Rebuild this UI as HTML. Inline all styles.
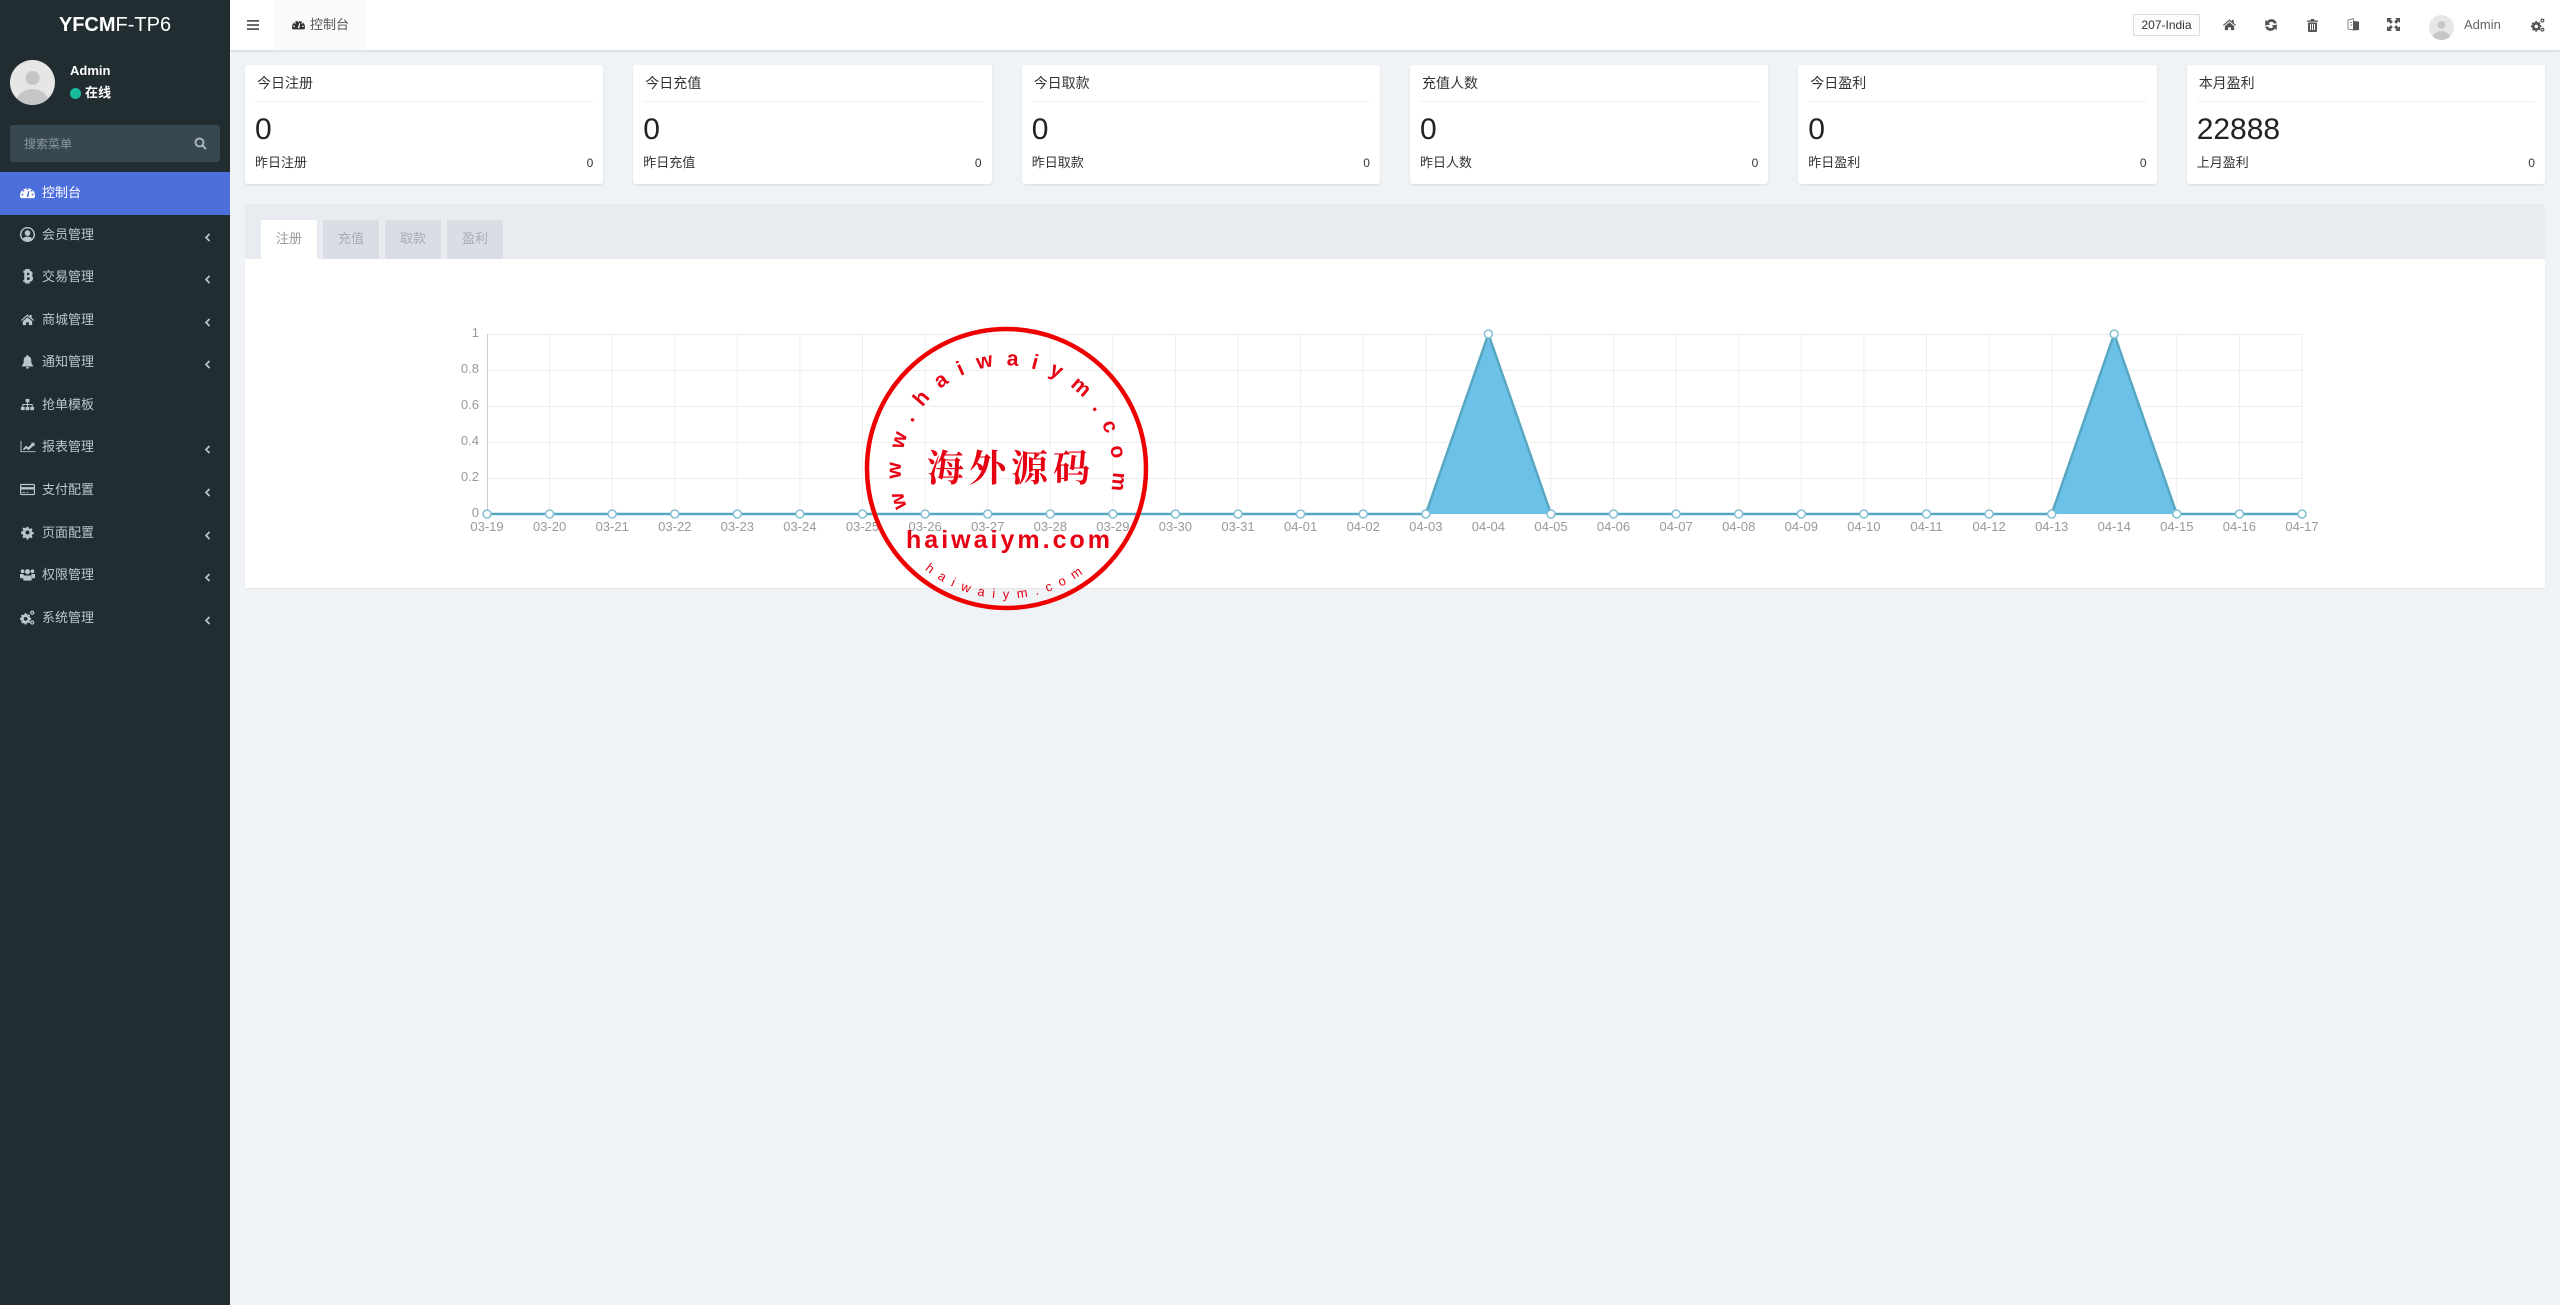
<!DOCTYPE html>
<html lang="zh">
<head>
<meta charset="utf-8">
<title>控制台</title>
<style>
*{box-sizing:border-box}
html,body{margin:0;padding:0;width:2560px;height:1305px;overflow:hidden;background:#f0f3f6;font-family:"Liberation Sans","Noto Sans CJK SC",sans-serif;color:#333}
.abs,.side,.head,.card,.panel,.item,.t{position:absolute}
.side{left:0;top:0;width:230px;height:1305px;background:#222d32}
.logo{position:absolute;left:0;top:12px;width:230px;text-align:center;font-size:20px;line-height:26px;color:#fff}
.logo b{font-weight:700}
.item{left:0;width:230px;height:43px;color:#b8c7ce;font-size:13px;line-height:42px}
.item span{position:absolute;left:42px;top:0}
.item.on{background:#4d6fdc;color:#fff}
.item svg.ic{position:absolute;left:20px;top:13px;width:15px;height:15px;fill:currentColor}
.item svg.ch{position:absolute;left:203px;top:16px;width:10px;height:14px;fill:none;stroke:#b8c7ce;stroke-width:1.7}
.head{left:230px;top:0;width:2330px;height:50px;background:#fff;box-shadow:0 1px 3px rgba(0,0,0,.13)}
.card{top:65px;width:358.3px;height:119px;background:#fff;border-radius:3px;box-shadow:0 1px 2px rgba(0,0,0,.1)}
.card .h{position:absolute;left:12px;top:8px;font-size:14px;line-height:20px;color:#333}
.card .l{position:absolute;left:10px;right:10px;top:36px;height:1px;background:#eef0f2}
.card .n{position:absolute;left:10px;top:46px;font-size:30px;line-height:38px;color:#222}
.card .s{position:absolute;left:10px;top:88px;font-size:13px;line-height:20px;color:#333}
.card .v{position:absolute;right:10px;top:88px;font-size:12px;line-height:20px;color:#333}
.panel{left:245px;top:204px;width:2300px;height:384px;background:#fff;box-shadow:0 1px 1px rgba(0,0,0,.06)}
.ph{position:absolute;left:0;top:0;width:2300px;height:55px;background:#e8ecf0}
.tab{position:absolute;top:16px;width:56px;height:39px;background:#d8dee3;color:#a8adb2;font-size:13px;line-height:38px;text-align:center}
.tab.on{background:#fff;color:#999}
svg.i{position:absolute;fill:#555}
</style>
</head>
<body>
<div class="side">
  <div class="logo"><b>YFCM</b>F-TP6</div>
  <svg class="abs" style="left:10px;top:60px" width="45" height="45" viewBox="0 0 45 45"><defs><clipPath id="av"><circle cx="22.5" cy="22.5" r="22.5"/></clipPath></defs><circle cx="22.5" cy="22.5" r="22.5" fill="#e6e6e6"/><g clip-path="url(#av)" fill="#c6c6c6"><circle cx="22.5" cy="18" r="7"/><ellipse cx="22.5" cy="42" rx="16" ry="13"/></g></svg>
  <div class="abs" style="left:70px;top:61px;font-size:13px;line-height:20px;font-weight:700;color:#fff">Admin</div>
  <div class="abs" style="left:70px;top:88px;width:11px;height:11px;border-radius:50%;background:#18bc9c"></div>
  <div class="abs" style="left:85px;top:83px;font-size:13px;line-height:20px;font-weight:700;color:#fff">在线</div>
  <div class="abs" style="left:10px;top:125px;width:210px;height:37px;background:#374850;border-radius:3px"></div>
  <div class="abs" style="left:24px;top:135px;font-size:12px;line-height:19px;color:#8b979d">搜索菜单</div>
  <svg class="abs" style="left:194px;top:137px" width="13" height="13" viewBox="0 0 13 13" fill="none" stroke="#a9b5ba" stroke-width="2"><circle cx="5.5" cy="5.5" r="4"/><path d="M8.5 8.5L12 12"/></svg>

  <div class="item on" style="top:172px"><svg class="ic" viewBox="0 0 16 16"><path fill-rule="evenodd" d="M0 11a8 7.5 0 0 1 16 0c0 1-.2 2-.7 3H.7C.2 13 0 12 0 11zM8 5.2a1 1 0 1 0 0-2 1 1 0 0 0 0 2zM3.6 7a1 1 0 1 0 0-2 1 1 0 0 0 0 2zM12.4 7a1 1 0 1 0 0-2 1 1 0 0 0 0 2zM2.6 11.2a1 1 0 1 0 0-2 1 1 0 0 0 0 2zM13.4 11.2a1 1 0 1 0 0-2 1 1 0 0 0 0 2zM7 12.5h2.2L10 6.5l-1-.2z"/></svg><span>控制台</span></div>

  <div class="item" style="top:214px"><svg class="ic" viewBox="0 0 16 16"><path fill-rule="evenodd" d="M8 0a8 8 0 1 1 0 16A8 8 0 0 1 8 0zm0 1.500a6.500 6.500 0 0 0-4.800 10.800C4.100 10.800 5.800 10.300 8 10.300s3.900.5 4.800 2A6.500 6.500 0 0 0 8 1.500zM8 3.500a3 3 0 1 1 0 6 3 3 0 0 1 0-6z"/></svg><span>会员管理</span><svg class="ch" viewBox="0 0 10 14"><path d="M6.500 4L3 7.500 6.500 11"/></svg></div>

  <div class="item" style="top:256px"><svg class="ic" viewBox="0 0 16 16" style="stroke:currentColor;stroke-width:.9"><path fill-rule="evenodd" d="M4 2h2V.5h1.500V2h1V.5H10v1.700c2 .3 3 1.300 3 2.800 0 1-.5 1.800-1.400 2.300 1.200.4 1.900 1.300 1.900 2.700 0 2-1.500 3-3.500 3.200V15H8.500v-1.500h-1V15H6v-1.500H4V12h1V3.500H4zM7 3.500V7h1.800c1 0 1.700-.6 1.700-1.700S9.800 3.500 8.800 3.500zM7 8.500V12h2.200c1.100 0 1.800-.7 1.800-1.800s-.7-1.700-1.800-1.700z"/></svg><span>交易管理</span><svg class="ch" viewBox="0 0 10 14"><path d="M6.500 4L3 7.500 6.500 11"/></svg></div>

  <div class="item" style="top:299px"><svg class="ic" viewBox="0 0 16 16"><path d="M8 2.500L1 8.500l.8.900L8 4.200l6.200 5.200.8-.9-2.500-2.100V3h-2v1.700zM3 9.800V14h3.500v-3h3v3H13V9.800L8 5.600z"/></svg><span>商城管理</span><svg class="ch" viewBox="0 0 10 14"><path d="M6.500 4L3 7.500 6.500 11"/></svg></div>

  <div class="item" style="top:341px"><svg class="ic" viewBox="0 0 16 16"><path d="M8 1c.6 0 1 .4 1 1v.4c2 .5 3 2.200 3 4.300 0 3 .5 4.300 2 5.800v.8H2v-.8c1.500-1.500 2-2.800 2-5.800 0-2.100 1-3.800 3-4.300V2c0-.6.400-1 1-1zM6.300 14h3.400c0 1-.8 1.700-1.700 1.700S6.300 15 6.300 14z"/></svg><span>通知管理</span><svg class="ch" viewBox="0 0 10 14"><path d="M6.500 4L3 7.500 6.500 11"/></svg></div>

  <div class="item" style="top:384px"><svg class="ic" viewBox="0 0 16 16"><path d="M6 2h4v3.500H8.500V7.500H13.500V10.500H15v3.500h-4v-3.500h1.500V8.500h-4v2H10v3.500H6v-3.500h1.500v-2h-4v2H5v3.500H1v-3.500h1.500V7.500h5V5.500H6z"/></svg><span>抢单模板</span></div>

  <div class="item" style="top:426px"><svg class="ic" viewBox="0 0 16 16" style="left:20px;width:16px"><path d="M0 2h1v11h15v1H0zM2.500 11l3.200-4 2.600 1.800L12 5l-1-1h4v4l-1-1-5.500 5-2.500-2-2.200 2z"/></svg><span>报表管理</span><svg class="ch" viewBox="0 0 10 14"><path d="M6.500 4L3 7.500 6.500 11"/></svg></div>

  <div class="item" style="top:469px"><svg class="ic" viewBox="0 0 16 16"><path fill-rule="evenodd" d="M1.500 2h13c.8 0 1.500.7 1.500 1.500v9c0 .8-.7 1.500-1.500 1.500h-13C.7 14 0 13.300 0 12.500v-9C0 2.700.7 2 1.500 2zM1.300 5.500h13.400V3.300H1.300zM1.300 8v4.700h13.400V8zM2.500 10.500h3v1h-3zM7 10.500h2v1H7z"/></svg><span>支付配置</span><svg class="ch" viewBox="0 0 10 14"><path d="M6.500 4L3 7.500 6.500 11"/></svg></div>

  <div class="item" style="top:512px"><svg class="ic" viewBox="0 0 16 16"><path fill-rule="evenodd" d="M6.800 1h2.400l.4 2 1.400.6 1.700-1.100 1.700 1.700-1.100 1.700.6 1.400 2 .4v2.400l-2 .4-.6 1.400 1.100 1.700-1.700 1.700-1.700-1.100-1.400.6-.4 2H6.800l-.4-2-1.400-.6-1.700 1.100-1.700-1.700 1.100-1.700-.6-1.400-2-.4V6.800l2-.4.6-1.400-1.100-1.700 1.700-1.700 1.700 1.100 1.400-.6zM8 5.500a2.500 2.500 0 1 0 0 5 2.500 2.500 0 0 0 0-5z" transform="translate(1.200 1.200) scale(.85)"/></svg><span>页面配置</span><svg class="ch" viewBox="0 0 10 14"><path d="M6.500 4L3 7.500 6.500 11"/></svg></div>

  <div class="item" style="top:554px"><svg class="ic" viewBox="0 0 16 16"><circle cx="2.700" cy="4.500" r="2"/><circle cx="13.300" cy="4.500" r="2"/><circle cx="8" cy="5" r="2.700"/><path d="M0 7.500h3.500c.3 1 .8 1.600 1.500 2-1 .5-1.500 1.500-1.500 2.500H1c-.6 0-1-.4-1-1zM16 7.500h-3.500c-.3 1-.8 1.600-1.500 2 1 .5 1.500 1.500 1.500 2.500H15c.6 0 1-.4 1-1zM5 9h6c.8 0 1.500.8 1.500 2v2.500c0 .6-.4 1-1 1h-7c-.6 0-1-.4-1-1V11c0-1.200.7-2 1.500-2z"/></svg><span>权限管理</span><svg class="ch" viewBox="0 0 10 14"><path d="M6.500 4L3 7.500 6.500 11"/></svg></div>

  <div class="item" style="top:597px"><svg class="ic" viewBox="0 0 16 16"><g fill-rule="evenodd"><path d="M5 3.500h2l.3 1.300 1 .4 1.100-.7 1.400 1.400-.7 1.100.4 1 1.300.3v2l-1.300.3-.4 1 .7 1.100-1.400 1.400-1.100-.7-1 .4L7 15.500H5l-.3-1.300-1-.4-1.100.7-1.400-1.400.7-1.100-.4-1L0 10.500v-2l1.300-.3.4-1L1 6.100l1.400-1.400 1.100.7 1-.4zM6 7.500a2 2 0 1 0 0 4 2 2 0 0 0 0-4z"/><path d="M13 .5a2.300 2.300 0 1 1 0 4.600 2.300 2.300 0 0 1 0-4.600zm0 1.400a.9.900 0 1 0 0 1.800.9.900 0 0 0 0-1.800zM13 11a2.300 2.300 0 1 1 0 4.600A2.300 2.300 0 0 1 13 11zm0 1.400a.9.900 0 1 0 0 1.800.9.900 0 0 0 0-1.800z"/></g></svg><span>系统管理</span><svg class="ch" viewBox="0 0 10 14"><path d="M6.500 4L3 7.500 6.500 11"/></svg></div>
</div>

<div class="head">
  <svg class="i" style="left:17px;top:19px" width="12" height="12" viewBox="0 0 12 12"><path d="M0 1h12v1.800H0zM0 5.100h12v1.800H0zM0 9.200h12V11H0z"/></svg>
  <div class="abs" style="left:45px;top:0;width:90px;height:50px;background:#fafafa"></div>
  <svg class="i" style="left:62px;top:18px;fill:#333" width="13" height="13" viewBox="0 0 16 16"><path fill-rule="evenodd" d="M0 11a8 7.500 0 0 1 16 0c0 1-.2 2-.7 3H.7C.2 13 0 12 0 11zM8 5.200a1 1 0 1 0 0-2 1 1 0 0 0 0 2zM3.600 7a1 1 0 1 0 0-2 1 1 0 0 0 0 2zM12.400 7a1 1 0 1 0 0-2 1 1 0 0 0 0 2zM2.600 11.200a1 1 0 1 0 0-2 1 1 0 0 0 0 2zM13.400 11.200a1 1 0 1 0 0-2 1 1 0 0 0 0 2zM7 12.500h2.200L10 6.500l-1-.2z"/></svg>
  <div class="abs" style="left:80px;top:15px;font-size:13px;line-height:20px;color:#555">控制台</div>

  <div class="abs" style="left:1903px;top:14px;width:67px;height:22px;border:1px solid #ddd;background:#fcfcfc;font-size:12px;line-height:20px;text-align:center;color:#333">207-India</div>
  <svg class="i" style="left:1992px;top:17px" width="15" height="15" viewBox="0 0 16 16"><path d="M8 2.500L1 8.500l.8.900L8 4.200l6.200 5.200.8-.9-2.500-2.100V3h-2v1.700zM3 9.800V14h3.500v-3h3v3H13V9.800L8 5.600z"/></svg>
  <svg class="i" style="left:2034px;top:18px" width="14" height="14" viewBox="0 0 12 12"><path d="M11 4.500C10.400 2.300 8.400.9 6.200 1 4.800 1.100 3.500 1.700 2.700 2.800L1.300 1.500.8 6.300l4.700-.6-1.400-1.300c.5-.7 1.300-1.100 2.200-1.100 1 0 1.900.6 2.300 1.500zM1 7.500c.6 2.200 2.600 3.600 4.800 3.500 1.400-.1 2.700-.7 3.500-1.800l1.400 1.300.5-4.800-4.700.6 1.400 1.300c-.5.7-1.300 1.100-2.200 1.100-1 0-1.900-.6-2.300-1.500z"/></svg>
  <svg class="i" style="left:2077px;top:19px" width="11" height="13" viewBox="0 0 11 13"><path fill-rule="evenodd" d="M4 0h3l.7 1.500H11v1.300H0V1.500h3.300zM1 3.500h9V12c0 .6-.4 1-1 1H2c-.6 0-1-.4-1-1zM3 5v6h1V5zm2 0v6h1V5zm2 0v6h1V5z"/></svg>
  <svg class="abs" style="left:2117px;top:18px" width="13" height="14" viewBox="0 0 13 14"><path d="M1 2l5.500-1.500V12L1 11z" fill="none" stroke="#888" stroke-width="1"/><path d="M6 3l6 .5v8.500l-6 .5z" fill="#555"/><path d="M3 4.500h2M3.500 8l1.500-2" stroke="#888" stroke-width="1" fill="none"/></svg>
  <svg class="i" style="left:2157px;top:18px" width="13" height="13" viewBox="0 0 12 12"><path d="M0 0h4.500L3.200 1.300 5.400 3.500 3.500 5.400 1.300 3.200 0 4.500zM12 0v4.500l-1.300-1.300-2.200 2.200-1.900-1.900 2.200-2.200L7.500 0zM0 12V7.500l1.300 1.300 2.200-2.200 1.900 1.900-2.200 2.200L4.500 12zM12 12H7.500l1.300-1.300-2.200-2.200 1.900-1.900 2.200 2.200L12 7.500z"/></svg>
  <svg class="abs" style="left:2199px;top:15px" width="25" height="25" viewBox="0 0 45 45"><defs><clipPath id="av2"><circle cx="22.500" cy="22.500" r="22.500"/></clipPath></defs><circle cx="22.500" cy="22.500" r="22.500" fill="#e6e6e6"/><g clip-path="url(#av2)" fill="#c6c6c6"><circle cx="22.500" cy="18" r="7"/><ellipse cx="22.500" cy="42" rx="16" ry="13"/></g></svg>
  <div class="abs" style="left:2234px;top:15px;font-size:13px;line-height:20px;color:#666">Admin</div>
  <svg class="i" style="left:2301px;top:18px" width="14" height="14" viewBox="0 0 16 16"><g fill-rule="evenodd"><path d="M5 3.500h2l.3 1.300 1 .4 1.100-.7 1.400 1.400-.7 1.100.4 1 1.300.3v2l-1.300.3-.4 1 .7 1.100-1.400 1.400-1.100-.7-1 .4L7 15.500H5l-.3-1.300-1-.4-1.100.7-1.400-1.400.7-1.100-.4-1L0 10.500v-2l1.300-.3.4-1L1 6.100l1.400-1.400 1.100.7 1-.4zM6 7.500a2 2 0 1 0 0 4 2 2 0 0 0 0-4z"/><path d="M13 .5a2.300 2.300 0 1 1 0 4.600 2.300 2.300 0 0 1 0-4.600zm0 1.400a.9.900 0 1 0 0 1.800.9.900 0 0 0 0-1.800zM13 11a2.300 2.300 0 1 1 0 4.600A2.300 2.300 0 0 1 13 11zm0 1.400a.9.900 0 1 0 0 1.800.9.900 0 0 0 0-1.800z"/></g></svg>
</div>

<div class="card" style="left:245px"><div class="h">今日注册</div><div class="l"></div><div class="n">0</div><div class="s">昨日注册</div><div class="v">0</div></div>
<div class="card" style="left:633.3px"><div class="h">今日充值</div><div class="l"></div><div class="n">0</div><div class="s">昨日充值</div><div class="v">0</div></div>
<div class="card" style="left:1021.7px"><div class="h">今日取款</div><div class="l"></div><div class="n">0</div><div class="s">昨日取款</div><div class="v">0</div></div>
<div class="card" style="left:1410px"><div class="h">充值人数</div><div class="l"></div><div class="n">0</div><div class="s">昨日人数</div><div class="v">0</div></div>
<div class="card" style="left:1798.3px"><div class="h">今日盈利</div><div class="l"></div><div class="n">0</div><div class="s">昨日盈利</div><div class="v">0</div></div>
<div class="card" style="left:2186.7px"><div class="h">本月盈利</div><div class="l"></div><div class="n">22888</div><div class="s">上月盈利</div><div class="v">0</div></div>

<div class="panel">
  <div class="ph"></div>
  <div class="tab on" style="left:16px">注册</div>
  <div class="tab" style="left:78px">充值</div>
  <div class="tab" style="left:140px">取款</div>
  <div class="tab" style="left:202px">盈利</div>
</div>

<svg class="abs" style="left:0;top:0" width="2560" height="1305" viewBox="0 0 2560 1305">
  <g stroke="#eeeeee" stroke-width="1" fill="none">
    <path d="M487 334.5H2302M487 370.5H2302M487 406.5H2302M487 442.5H2302M487 478.5H2302"/>
    <path d="M549.6 334V514M612.2 334V514M674.8 334V514M737.3 334V514M799.9 334V514M862.5 334V514M925.1 334V514M987.7 334V514M1050.3 334V514M1112.9 334V514M1175.4 334V514M1238 334V514M1300.6 334V514M1363.2 334V514M1425.8 334V514M1488.4 334V514M1551 334V514M1613.5 334V514M1676.1 334V514M1738.7 334V514M1801.3 334V514M1863.9 334V514M1926.5 334V514M1989.1 334V514M2051.7 334V514M2114.2 334V514M2176.8 334V514M2239.4 334V514M2302 334V514"/>
  </g>
  <path d="M487.5 334V514" stroke="#cccccc" fill="none"/>
  <path d="M1425.8 514L1488.4 334L1551 514zM2051.7 514L2114.2 334L2176.8 514z" fill="#6cc1e9"/>
  <path d="M487 514H1425.8L1488.4 334L1551 514H2051.7L2114.2 334L2176.8 514H2302" fill="none" stroke="#58a7c2" stroke-width="2.500"/>
  <g fill="#fff" stroke="#85bfd4" stroke-width="1.500">
    <circle cx="487" cy="514" r="4"/><circle cx="549.6" cy="514" r="4"/><circle cx="612.2" cy="514" r="4"/><circle cx="674.8" cy="514" r="4"/><circle cx="737.3" cy="514" r="4"/><circle cx="799.9" cy="514" r="4"/><circle cx="862.5" cy="514" r="4"/><circle cx="925.1" cy="514" r="4"/><circle cx="987.7" cy="514" r="4"/><circle cx="1050.3" cy="514" r="4"/><circle cx="1112.9" cy="514" r="4"/><circle cx="1175.4" cy="514" r="4"/><circle cx="1238" cy="514" r="4"/><circle cx="1300.6" cy="514" r="4"/><circle cx="1363.2" cy="514" r="4"/><circle cx="1425.8" cy="514" r="4"/><circle cx="1488.4" cy="334" r="4"/><circle cx="1551" cy="514" r="4"/><circle cx="1613.5" cy="514" r="4"/><circle cx="1676.1" cy="514" r="4"/><circle cx="1738.7" cy="514" r="4"/><circle cx="1801.3" cy="514" r="4"/><circle cx="1863.9" cy="514" r="4"/><circle cx="1926.5" cy="514" r="4"/><circle cx="1989.1" cy="514" r="4"/><circle cx="2051.7" cy="514" r="4"/><circle cx="2114.2" cy="334" r="4"/><circle cx="2176.8" cy="514" r="4"/><circle cx="2239.4" cy="514" r="4"/><circle cx="2302" cy="514" r="4"/>
  </g>
  <g font-family="'Liberation Sans',sans-serif" font-size="13" fill="#999" text-anchor="end">
    <text x="479" y="337">1</text><text x="479" y="373">0.8</text><text x="479" y="409">0.6</text><text x="479" y="445">0.4</text><text x="479" y="481">0.2</text><text x="479" y="517">0</text>
  </g>
  <g font-family="'Liberation Sans',sans-serif" font-size="13" fill="#999" text-anchor="middle">
    <text x="487" y="531">03-19</text><text x="549.6" y="531">03-20</text><text x="612.2" y="531">03-21</text><text x="674.8" y="531">03-22</text><text x="737.3" y="531">03-23</text><text x="799.9" y="531">03-24</text><text x="862.5" y="531">03-25</text><text x="925.1" y="531">03-26</text><text x="987.7" y="531">03-27</text><text x="1050.3" y="531">03-28</text><text x="1112.9" y="531">03-29</text><text x="1175.4" y="531">03-30</text><text x="1238" y="531">03-31</text><text x="1300.6" y="531">04-01</text><text x="1363.2" y="531">04-02</text><text x="1425.8" y="531">04-03</text><text x="1488.4" y="531">04-04</text><text x="1551" y="531">04-05</text><text x="1613.5" y="531">04-06</text><text x="1676.1" y="531">04-07</text><text x="1738.7" y="531">04-08</text><text x="1801.3" y="531">04-09</text><text x="1863.9" y="531">04-10</text><text x="1926.5" y="531">04-11</text><text x="1989.1" y="531">04-12</text><text x="2051.7" y="531">04-13</text><text x="2114.2" y="531">04-14</text><text x="2176.8" y="531">04-15</text><text x="2239.4" y="531">04-16</text><text x="2302" y="531">04-17</text>
  </g>

  <defs>
    <path id="arcTop" d="M907 507A106 106 0 1 1 1112 485"/>
    <path id="arcBot" d="M924.7 569.5A130 130 0 0 0 1088.3 569.5"/>
  </defs>
  <circle cx="1006.5" cy="468.5" r="139.5" fill="none" stroke="#ee0000" stroke-width="4.500"/>
  <text font-family="'Liberation Sans',sans-serif" font-weight="700" font-size="21" fill="#e60012"><textPath href="#arcTop" textLength="388" lengthAdjust="spacing">www.haiwaiym.com</textPath></text>
  <text x="927" y="481" font-family="'Noto Serif CJK SC',serif" font-weight="700" font-size="37" fill="#e60012" letter-spacing="5">海外源码</text>
  <text x="906" y="548" font-family="'Liberation Sans',sans-serif" font-weight="700" font-size="25" fill="#e60012" textLength="204" lengthAdjust="spacing">haiwaiym.com</text>
  <text font-family="'Liberation Sans',sans-serif" font-size="13" fill="#e60012"><textPath href="#arcBot" textLength="170" lengthAdjust="spacing">haiwaiym.com</textPath></text>
</svg>
</body>
</html>
